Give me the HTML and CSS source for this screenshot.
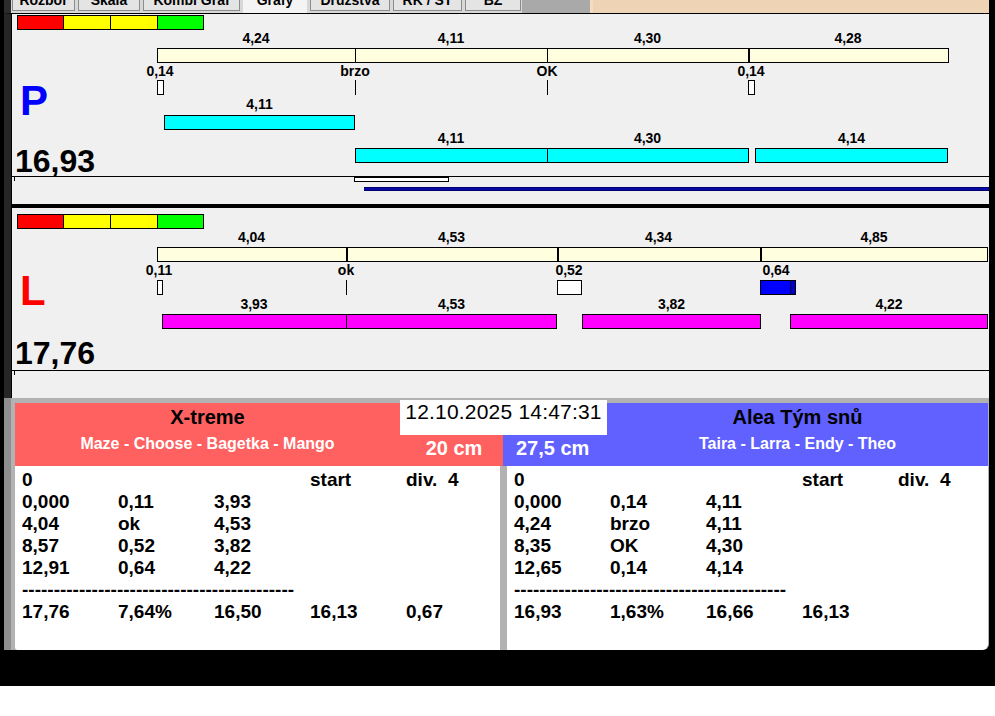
FILE: index.html
```html
<!DOCTYPE html>
<html lang="cs">
<head>
<meta charset="utf-8">
<title>Grafy</title>
<link rel="stylesheet" href="styles.css">
</head>
<body>
<div class="app">
  <div class="frame">
    <div class="tabs">
      <div class="tab" style="width:63px"><span>Rozbor</span></div>
      <div class="tab" style="width:62px"><span>Skála</span></div>
      <div class="tab" style="width:97px"><span>Kombi Graf</span></div>
      <div class="tab active" style="width:64px"><span>Grafy</span></div>
      <div class="tab" style="width:80px"><span>Družstva</span></div>
      <div class="tab" style="width:69px"><span>RK / ST</span></div>
      <div class="tab" style="width:56px"><span>BZ</span></div>
      <div class="tab-gray"></div>
      <div class="tab-peach"></div>
    </div>

    <div class="graph">
      <section class="lane lane-p">
        <div class="traffic"><i class="c-red"></i><i class="c-yel"></i><i class="c-yel"></i><i class="c-grn"></i></div>
        <div class="plot">
          <div class="side">
            <div class="hand hand-p">P</div>
            <div class="total">16,93</div>
          </div>
          <div class="tracks">
            <div class="track lbl">
              <span style="left:0;width:198px">4,24</span>
              <span style="left:198px;width:192px">4,11</span>
              <span style="left:390px;width:201px">4,30</span>
              <span style="left:591px;width:200px">4,28</span>
            </div>
            <div class="track bar gap2">
              <div class="segs cream" style="left:0;width:792px"><i style="width:197px"></i><i style="width:192px"></i><i style="width:201px"></i><i class="rest thick"></i></div>
            </div>
            <div class="track lbl">
              <span style="left:-27px;width:60px">0,14</span>
              <span style="left:168px;width:60px">brzo</span>
              <span style="left:360px;width:60px">OK</span>
              <span style="left:564px;width:60px">0,14</span>
            </div>
            <div class="track ticks gap1">
              <i class="tick-box" style="left:0;width:7px"></i>
              <i class="tick-line" style="left:198px"></i>
              <i class="tick-line" style="left:390px"></i>
              <i class="tick-box" style="left:591px;width:7px"></i>
            </div>
            <div class="track lbl gap1">
              <span style="left:7px;width:191px">4,11</span>
            </div>
            <div class="track bar gap3">
              <div class="segs cyan" style="left:7px;width:191px"><i class="rest"></i></div>
            </div>
            <div class="track lbl">
              <span style="left:198px;width:192px">4,11</span>
              <span style="left:390px;width:201px">4,30</span>
              <span style="left:598px;width:193px">4,14</span>
            </div>
            <div class="track bar gap2">
              <div class="segs cyan" style="left:198px;width:394px"><i style="width:191px"></i><i class="rest"></i></div>
              <div class="segs cyan" style="left:598px;width:193px"><i class="rest"></i></div>
            </div>
          </div>
        </div>
        <div class="baseline"></div>
        <div class="under">
          <i class="mini-tick" style="left:2px"></i>
          <i class="run-box" style="left:342px;width:95px"></i>
        </div>
        <div class="progress"></div>
      </section>

      <div class="divider"></div>

      <section class="lane lane-l">
        <div class="traffic"><i class="c-red"></i><i class="c-yel"></i><i class="c-yel"></i><i class="c-grn"></i></div>
        <div class="plot">
          <div class="side">
            <div class="hand hand-l">L</div>
            <div class="total">17,76</div>
          </div>
          <div class="tracks">
            <div class="track lbl">
              <span style="left:0;width:189px">4,04</span>
              <span style="left:189px;width:211px">4,53</span>
              <span style="left:400px;width:203px">4,34</span>
              <span style="left:603px;width:228px">4,85</span>
            </div>
            <div class="track bar gap2">
              <div class="segs cream" style="left:0;width:831px"><i style="width:188px"></i><i class="thick" style="width:211px"></i><i class="thick" style="width:203px"></i><i class="rest thick"></i></div>
            </div>
            <div class="track lbl">
              <span style="left:-28px;width:60px">0,11</span>
              <span style="left:159px;width:60px">ok</span>
              <span style="left:382px;width:60px">0,52</span>
              <span style="left:589px;width:60px">0,64</span>
            </div>
            <div class="track ticks gap2">
              <i class="tick-box" style="left:0;width:6px"></i>
              <i class="tick-line" style="left:189px"></i>
              <i class="tick-box" style="left:400px;width:25px"></i>
              <i class="tick-box blue" style="left:603px;width:36px"><b style="width:30px"></b></i>
            </div>
            <div class="track lbl gap1">
              <span style="left:5px;width:184px">3,93</span>
              <span style="left:189px;width:211px">4,53</span>
              <span style="left:425px;width:179px">3,82</span>
              <span style="left:633px;width:198px">4,22</span>
            </div>
            <div class="track bar gap2">
              <div class="segs magenta" style="left:5px;width:395px"><i style="width:183px"></i><i class="rest"></i></div>
              <div class="segs magenta" style="left:425px;width:179px"><i class="rest"></i></div>
              <div class="segs magenta" style="left:633px;width:198px"><i class="rest"></i></div>
            </div>
          </div>
        </div>
        <div class="baseline"></div>
        <div class="under">
          <i class="mini-tick" style="left:2px"></i>
        </div>
      </section>
    </div>

    <div class="bottom">
      <div class="date">12.10.2025 14:47:31</div>
      <div class="heads">
        <div class="head head-red">
          <div class="names">
            <div class="team">X-treme</div>
            <div class="dogs">Maze - Choose - Bagetka - Mango</div>
          </div>
          <div class="cm">20 cm</div>
        </div>
        <div class="head head-blue">
          <div class="cm">27,5 cm</div>
          <div class="names">
            <div class="team">Alea Tým snů</div>
            <div class="dogs">Taira - Larra - Endy - Theo</div>
          </div>
        </div>
      </div>
      <div class="tables">
        <div class="table table-left">
          <div class="rows">
            <div class="row"><span>0</span><span></span><span></span><span>start</span><span>div.  4</span></div>
            <div class="row"><span>0,000</span><span>0,11</span><span>3,93</span></div>
            <div class="row"><span>4,04</span><span>ok</span><span>4,53</span></div>
            <div class="row"><span>8,57</span><span>0,52</span><span>3,82</span></div>
            <div class="row"><span>12,91</span><span>0,64</span><span>4,22</span></div>
            <div class="row"><span class="dash">-------------------------------------------</span></div>
            <div class="row"><span>17,76</span><span>7,64%</span><span>16,50</span><span>16,13</span><span>0,67</span></div>
          </div>
          <div class="scroll"><i class="arrow"></i></div>
        </div>
        <div class="table table-right">
          <div class="rows">
            <div class="row"><span>0</span><span></span><span></span><span>start</span><span>div.  4</span></div>
            <div class="row"><span>0,000</span><span>0,14</span><span>4,11</span></div>
            <div class="row"><span>4,24</span><span>brzo</span><span>4,11</span></div>
            <div class="row"><span>8,35</span><span>OK</span><span>4,30</span></div>
            <div class="row"><span>12,65</span><span>0,14</span><span>4,14</span></div>
            <div class="row"><span class="dash">-------------------------------------------</span></div>
            <div class="row"><span>16,93</span><span>1,63%</span><span>16,66</span><span>16,13</span></div>
          </div>
          <div class="scroll scroll-narrow"><i class="arrow"></i></div>
        </div>
      </div>
    </div>
  </div>
</div>
</body>
</html>
```

FILE: styles.css
```css
* { box-sizing: border-box; margin: 0; padding: 0; }

html, body { background: #ffffff; }

body {
  width: 995px;
  height: 716px;
  overflow: hidden;
  font-family: "Liberation Sans", Arial, sans-serif;
  color: #000;
}

.app {
  height: 686px;
  background: #000;
  padding: 0 6px 0 4px;
}

.frame {
  height: 650px;
  display: flex;
  flex-direction: column;
}

/* ---------- tabs ---------- */
.tabs {
  flex: none;
  height: 13px;
  display: flex;
  gap: 3px;
  padding-left: 1px;
  border-left: 7px solid #2c2c2c;
  background: #d8d8d8;
  overflow: hidden;
}

.tab {
  flex: none;
  height: 11px;
  background: #e4e4e4;
  border: 1px solid #8c8c8c;
  border-top: none;
  overflow: hidden;
  text-align: center;
  font-size: 14px;
  font-weight: bold;
  line-height: 14px;
  white-space: nowrap;
}

.tab span { display: block; margin-top: -7px; }

.tab.active {
  height: 13px;
  background: #f4f4f4;
  border-color: #f4f4f4;
}

.tab-gray { flex: none; width: 68px; margin-left: -2px; background: #a9a9a9; }

.tab-peach {
  flex: 1;
  margin-left: -3px;
  background: #eed3b4;
  border-left: 3px solid #f3dcc0;
}

/* ---------- graph ---------- */
.graph {
  flex: none;
  height: 385px;
  border-top: 1px solid #000;
  border-left: 7px solid #262626;
  box-shadow: inset 1px 0 0 #000;
  padding-left: 1px;
  background: #f0f0f0;
}

.lane { height: 190px; overflow: hidden; }

.divider { height: 4px; background: #000; }

.traffic {
  display: flex;
  width: 187px;
  height: 15px;
  margin: 1px 0 0 5px;
  border: 1px solid #000;
}

.lane-l .traffic { margin-top: 6px; }

.traffic i { display: block; height: 100%; flex: none; width: 47px; border-left: 1px solid #000; }
.traffic i:first-child { width: 45px; border-left: none; }
.traffic i:last-child { flex: 1; }
.c-red { background: #ff0000; }
.c-yel { background: #ffff00; }
.c-grn { background: #00ff00; }

.plot {
  display: grid;
  grid-template-columns: 145px 1fr;
  grid-template-rows: 146px;
  height: 146px;
}

.lane-l .plot { height: 141px; grid-template-rows: 141px; }

.side { display: flex; flex-direction: column; align-items: flex-start; min-height: 0; }

.hand {
  font-size: 42px;
  line-height: 42px;
  font-weight: bold;
  margin: 50px 0 0 8px;
}

.hand-p { color: #0000ff; }
.hand-l { color: #ff0000; margin-top: 41px; }

.total {
  font-size: 32px;
  line-height: 30px;
  height: 30px;
  font-weight: bold;
  margin: 24px 0 0 3px;
  white-space: nowrap;
}

.lane-l .total { margin-top: 26px; }

.tracks { display: flex; flex-direction: column; }

.track { position: relative; flex: none; }
.track > * { position: absolute; top: 0; }

.gap1 { margin-top: 1px; }
.gap2 { margin-top: 2px; }
.gap3 { margin-top: 3px; }

.lbl {
  height: 16px;
  font-size: 14px;
  line-height: 16px;
  font-weight: bold;
}

.lbl span { text-align: center; white-space: nowrap; }

.bar { height: 15px; }

.segs {
  height: 15px;
  display: flex;
  border: 1px solid #000;
}

.segs i { display: block; flex: none; height: 100%; }
.segs i + i { border-left: 1px solid #000; }
.segs i.rest { flex: 1; }
.segs i.thick { border-left-width: 2px; }

.cream { background: #ffffe0; }
.cyan { background: #00ffff; }
.magenta { background: #ff00ff; }

.ticks { height: 15px; }

.tick-line { display: block; width: 1px; height: 15px; background: #000; }

.tick-box {
  display: flex;
  height: 15px;
  border: 1px solid #000;
  background: #ffffff;
}

.tick-box.blue { background: #0000c8; }
.tick-box.blue b { display: block; height: 100%; background: #0000ff; border-right: 1px solid #000040; }

.baseline { height: 1px; background: #000; }

.under { position: relative; height: 10px; }
.under > * { position: absolute; top: 0; }

.mini-tick { display: block; width: 1px; height: 4px; background: #000; }

.run-box {
  display: block;
  height: 5px;
  background: #ffffff;
  border: 1px solid #000;
}

.progress {
  height: 4px;
  margin-left: 352px;
  background: #0808a6;
  border-top: 1px solid #00006a;
  border-bottom: 1px solid #00006a;
}

/* ---------- bottom ---------- */
.bottom {
  position: relative;
  flex: 1 1 auto;
  min-height: 0;
  display: flex;
  flex-direction: column;
  background: #b2b2b2;
  border-left: 7px solid #8e8e8e;
  padding: 5px 1px 0 4px;
  border-bottom-right-radius: 6px;
}

.date {
  position: absolute;
  left: 389px;
  top: 2px;
  width: 207px;
  height: 35px;
  background: #ffffff;
  text-align: center;
  font-size: 21px;
  line-height: 24px;
  letter-spacing: 0.2px;
  white-space: nowrap;
}

.heads { display: flex; height: 63px; flex: none; }

.head { display: flex; }
.head-red { width: 488px; background: #ff6060; }
.head-blue { flex: 1; background: #6161ff; }

.names { text-align: center; padding-top: 2px; white-space: nowrap; }
.head-red .names { width: 385px; }
.head-blue .names { flex: 1; }

.team {
  font-size: 20px;
  line-height: 24px;
  font-weight: bold;
  color: #000;
}

.dogs {
  margin-top: 5px;
  font-size: 16px;
  line-height: 20px;
  font-weight: bold;
  color: #ffffff;
}

.cm {
  padding-top: 33px;
  font-size: 20px;
  line-height: 24px;
  font-weight: bold;
  color: #ffffff;
  white-space: nowrap;
}

.head-red .cm { flex: 1; text-align: center; padding-left: 5px; }
.head-blue .cm { width: 104px; padding-left: 13px; }

.tables { display: flex; gap: 7px; flex: 1; min-height: 0; }

.table { display: flex; background: #ffffff; overflow: hidden; }
.table-left { width: 485px; border-bottom-left-radius: 3px; }
.table-right { flex: 1; border-bottom-right-radius: 6px; }

.rows {
  flex: 1;
  padding: 3px 0 0 7px;
  font-size: 19px;
  line-height: 22px;
  font-weight: bold;
}

.row {
  display: grid;
  grid-template-columns: repeat(5, 96px);
  height: 22px;
  white-space: pre;
}

.row .dash { grid-column: 1 / -1; }

.scroll {
  width: 16px;
  background: #f0f0f0;
  display: flex;
  justify-content: center;
  align-items: flex-start;
}

.scroll-narrow { width: 13px; }

.arrow {
  display: block;
  width: 0;
  height: 0;
  margin-top: 7px;
  border-left: 4px solid transparent;
  border-right: 4px solid transparent;
  border-bottom: 5px solid #a6a6a6;
}
```
